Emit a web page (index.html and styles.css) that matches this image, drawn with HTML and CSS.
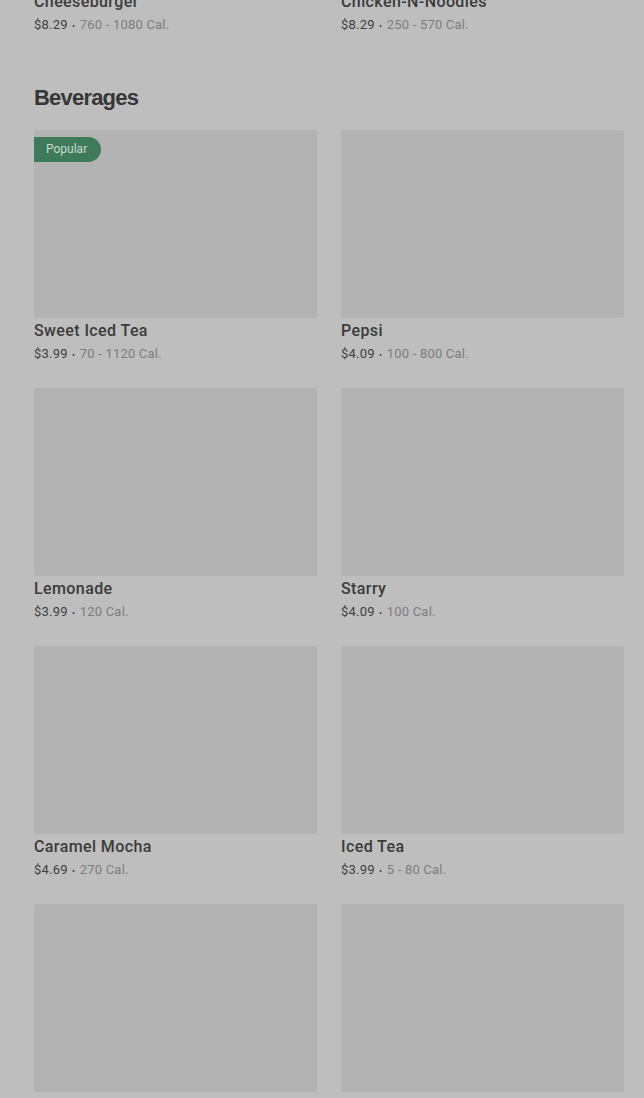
FILE: index.html
```html
<!DOCTYPE html>
<html lang="en">
<head>
    <meta charset="UTF-8">
    <meta name="viewport" content="width=device-width, initial-scale=1.0">
    <title>Menu</title>
    <link rel="stylesheet" href="styles.css">
</head>
<body>
    <div class="menu">
        <section class="section section-prev">
            <div class="grid">
                <div class="item">
                    <div class="item-name">Cheeseburger</div>
                    <div class="item-meta">$8.29 <span class="dot">•</span> <span class="cal">760 - 1080 Cal.</span></div>
                </div>
                <div class="item">
                    <div class="item-name">Chicken-N-Noodles</div>
                    <div class="item-meta">$8.29 <span class="dot">•</span> <span class="cal">250 - 570 Cal.</span></div>
                </div>
            </div>
        </section>

        <section class="section">
            <h2 class="section-title">Beverages</h2>
            <div class="grid">
                <div class="item">
                    <div class="item-img"><span class="badge">Popular</span></div>
                    <div class="item-name">Sweet Iced Tea</div>
                    <div class="item-meta">$3.99 <span class="dot">•</span> <span class="cal">70 - 1120 Cal.</span></div>
                </div>
                <div class="item">
                    <div class="item-img"></div>
                    <div class="item-name">Pepsi</div>
                    <div class="item-meta">$4.09 <span class="dot">•</span> <span class="cal">100 - 800 Cal.</span></div>
                </div>
                <div class="item">
                    <div class="item-img"></div>
                    <div class="item-name">Lemonade</div>
                    <div class="item-meta">$3.99 <span class="dot">•</span> <span class="cal">120 Cal.</span></div>
                </div>
                <div class="item">
                    <div class="item-img"></div>
                    <div class="item-name">Starry</div>
                    <div class="item-meta">$4.09 <span class="dot">•</span> <span class="cal">100 Cal.</span></div>
                </div>
                <div class="item">
                    <div class="item-img"></div>
                    <div class="item-name">Caramel Mocha</div>
                    <div class="item-meta">$4.69 <span class="dot">•</span> <span class="cal">270 Cal.</span></div>
                </div>
                <div class="item">
                    <div class="item-img"></div>
                    <div class="item-name">Iced Tea</div>
                    <div class="item-meta">$3.99 <span class="dot">•</span> <span class="cal">5 - 80 Cal.</span></div>
                </div>
                <div class="item">
                    <div class="item-img"></div>
                    <div class="item-name">Frosted Lemonade</div>
                    <div class="item-meta">$5.29 <span class="dot">•</span> <span class="cal">230 - 470 Cal.</span></div>
                </div>
                <div class="item">
                    <div class="item-img"></div>
                    <div class="item-name">Mountain Dew</div>
                    <div class="item-meta">$4.09 <span class="dot">•</span> <span class="cal">110 - 880 Cal.</span></div>
                </div>
            </div>
        </section>
    </div>
</body>
</html>
```

FILE: styles.css
```css
html, body { margin: 0; padding: 0; background: #bebebe; }
body { font-family: Roboto, "Liberation Sans", Arial, sans-serif; color: #3b3b3b; overflow: hidden; }
.menu { padding: 0 20px 0 34px; }
.section-prev { margin-top: -11px; }
.section-title { margin: 46px 0 16px; font-family: "Liberation Sans", Arial, sans-serif; font-size: 22px; line-height: 32px; font-weight: bold; letter-spacing: -0.8px; color: #363636; }
.grid { display: grid; grid-template-columns: 1fr 1fr; column-gap: 24px; row-gap: 23px; }
.item-img { position: relative; height: 188px; background: #b3b3b3; border-radius: 2px; }
.badge { position: absolute; top: 7px; left: 0; height: 25px; line-height: 25px; padding: 0 14px 0 12px; background: #3e7b5a; color: #c9d9d0; font-size: 12px; border-radius: 0 13px 13px 0; }
.item-name { padding-top: 1px; font-size: 16px; line-height: 24px; font-weight: 500; color: #3b3b3b; letter-spacing: 0.4px; }
.item-meta { height: 22px; font-size: 13px; line-height: 22px; color: #3e3e3e; letter-spacing: 0.2px; }
.item-meta .dot { font-size: 9px; margin: 0 1px; }
.item-meta .cal { color: #7d7d7d; }
```
